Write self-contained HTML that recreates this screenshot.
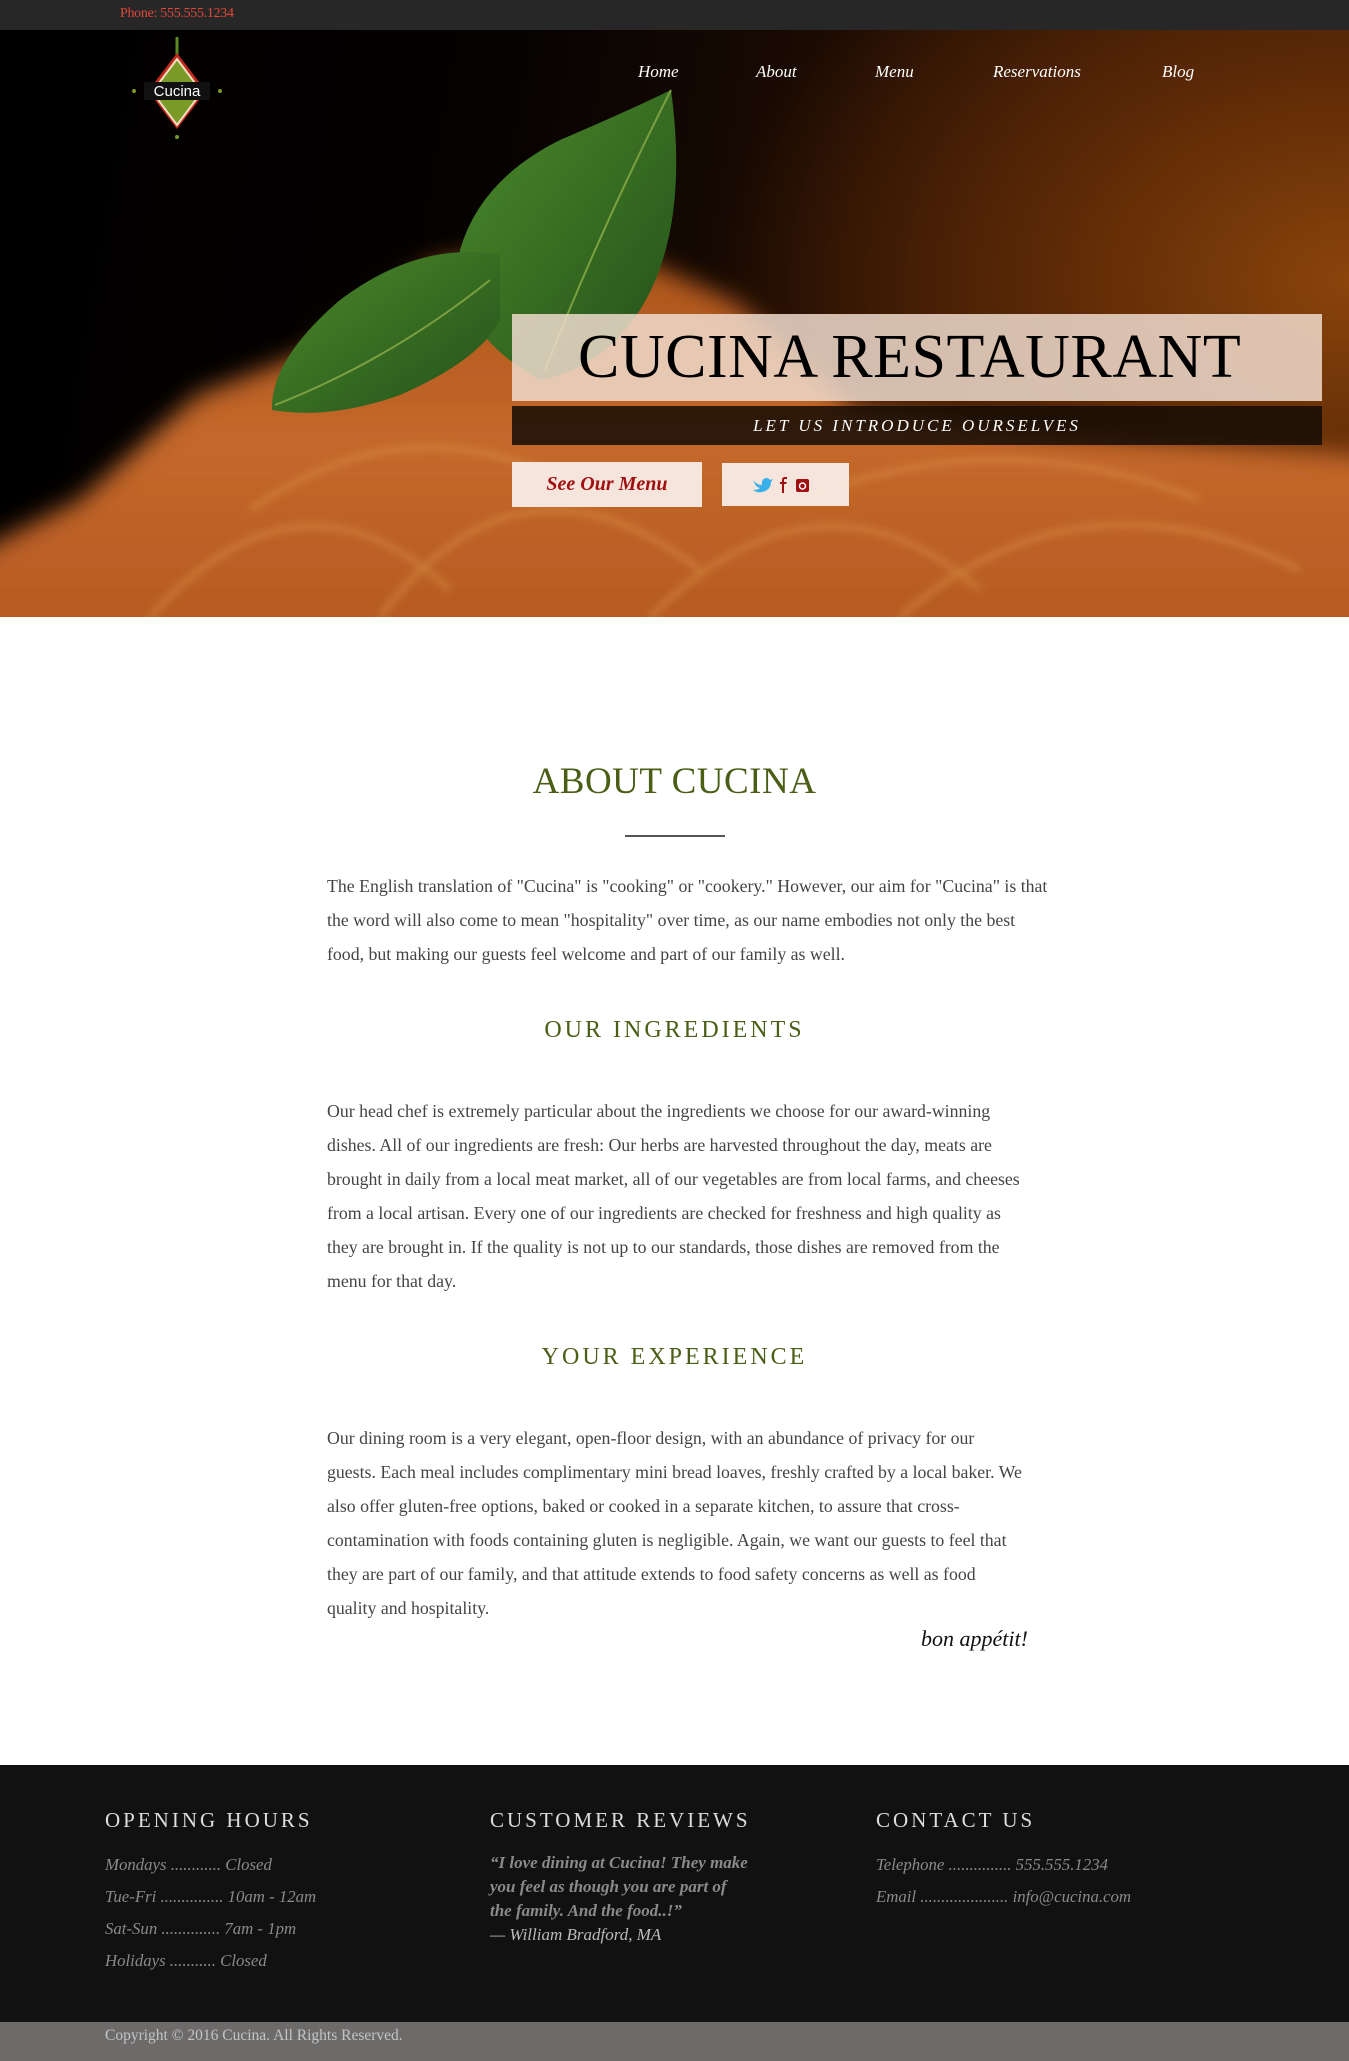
<!DOCTYPE html>
<html><head><meta charset="utf-8"><style>
*{margin:0;padding:0;box-sizing:border-box}
body{width:1349px;height:2061px;overflow:hidden;background:#fff;font-family:"Liberation Serif",serif;position:relative}
.abs{position:absolute}
#top{left:0;top:0;width:1349px;height:30px;background:#272727}
#top span{position:absolute;left:120px;top:6px;color:#e0483a;font-size:14px;letter-spacing:-0.3px}
#hero{left:0;top:30px;width:1349px;height:587px;overflow:hidden;
background:radial-gradient(ellipse 700px 500px at 1349px 250px,#8a440b 0%,#5a2806 45%,rgba(20,8,2,0) 90%),linear-gradient(100deg,#000 0%,#050201 35%,#1e0c03 60%,#3a1a05 100%)}
.nav{color:#fff;font-style:italic;font-size:17px}
#tbox{left:512px;top:314px;width:810px;height:87px;background:rgba(238,218,205,0.85)}
#tbox span{position:absolute;left:66px;top:8px;font-size:62px;color:#000;letter-spacing:0.5px;white-space:nowrap}
#dbar{left:512px;top:406px;width:810px;height:39px;background:rgba(20,12,5,0.85);color:#fff;font-style:italic;font-size:17px;letter-spacing:3px;text-align:center;line-height:39px}
#b1{left:512px;top:462px;width:190px;height:45px;background:rgba(250,240,235,0.92);color:#a01010;font-style:italic;font-weight:bold;font-size:20px;text-align:center;line-height:45px}
#b2{left:722px;top:463px;width:127px;height:43px;background:rgba(250,240,235,0.92)}
h2{position:absolute;left:0;width:1349px;text-align:center;color:#4a5e16;font-weight:normal}
p.t{position:absolute;left:327px;width:800px;font-size:17.8px;line-height:34px;color:#444;white-space:nowrap}
.fh{position:absolute;top:1808px;color:#ddd;font-size:21px;letter-spacing:3px}
.fi{position:absolute;color:#8a8a8a;font-style:italic;font-size:16.8px;line-height:32px;white-space:nowrap}
</style></head><body>
<div id="top" class="abs"><span>Phone: 555.555.1234</span></div>
<div id="hero" class="abs">
<svg class="abs" style="left:0;top:0" width="1349" height="587" viewBox="0 0 1349 587">
<defs>
<linearGradient id="pg" x1="0" y1="0" x2="0" y2="1">
<stop offset="0" stop-color="#a9521a"/><stop offset="0.45" stop-color="#c4682a"/><stop offset="1" stop-color="#b0561f"/></linearGradient>
<linearGradient id="lg" x1="0" y1="0" x2="1" y2="1"><stop offset="0" stop-color="#4c8a2a"/><stop offset="1" stop-color="#23501a"/></linearGradient>
<filter id="bl" x="-10%" y="-10%" width="120%" height="130%"><feGaussianBlur stdDeviation="12"/></filter>
<filter id="bl2"><feGaussianBlur stdDeviation="4"/></filter>
</defs>
<path d="M-60 540 L-60 660 L1420 660 L1420 430 L1052 404 L855 378 L736 272 L592 207 L434 233 L302 325 L197 365 L79 470 Z" fill="url(#pg)" filter="url(#bl)"/>
<g stroke="#e09a50" stroke-width="6" fill="none" opacity="0.45" filter="url(#bl2)">
<path d="M150 587 Q300 420 450 560"/><path d="M380 587 Q520 400 700 540"/><path d="M650 587 Q820 420 980 560"/><path d="M900 587 Q1080 430 1300 540"/><path d="M250 480 Q420 360 600 470"/><path d="M800 470 Q1000 390 1200 470"/>
</g>
<path d="M671 60 Q690 200 640 280 Q600 340 540 350 Q450 300 460 220 Q480 150 560 110 Q630 80 671 60 Z" fill="url(#lg)"/>
<path d="M671 60 Q600 200 545 340" stroke="#7aa040" stroke-width="2" fill="none"/>
<path d="M500 225 Q420 210 340 270 Q270 330 272 380 Q330 390 400 365 Q480 330 500 290 Z" fill="url(#lg)"/>
<path d="M275 375 Q390 330 490 250" stroke="#7aa040" stroke-width="2" fill="none"/>
</svg>
<svg class="abs" style="left:124px;top:5px" width="106" height="110" viewBox="0 0 106 110">
<path d="M53 2 L53 20" stroke="#5a8a20" stroke-width="3"/>
<path d="M53 18 L82 56 L53 94 L24 56 Z" fill="#c02a1e"/>
<path d="M53 24 L74 52 L32 52 Z" fill="#7a9a28" stroke="#f0e0c0" stroke-width="2"/>
<path d="M32 62 L74 62 L53 90 Z" fill="#7a9a28" stroke="#f0e0c0" stroke-width="2"/>
<rect x="20" y="47" width="66" height="18" fill="#111"/>
<text x="53" y="61" fill="#fff" font-family="Liberation Sans,sans-serif" font-size="15" text-anchor="middle">Cucina</text>
<circle cx="10" cy="56" r="2" fill="#7a9a28"/><circle cx="96" cy="56" r="2" fill="#7a9a28"/>
<circle cx="53" cy="102" r="2" fill="#7a9a28"/>
</svg>
<span class="abs nav" style="left:638px;top:32px">Home</span>
<span class="abs nav" style="left:756px;top:32px">About</span>
<span class="abs nav" style="left:875px;top:32px">Menu</span>
<span class="abs nav" style="left:993px;top:32px">Reservations</span>
<span class="abs nav" style="left:1162px;top:32px">Blog</span>
</div>
<div id="tbox" class="abs"><span>CUCINA RESTAURANT</span></div>
<div id="dbar" class="abs">LET US INTRODUCE OURSELVES</div>
<div id="b1" class="abs">See Our Menu</div>
<div id="b2" class="abs">
<svg class="abs" style="left:30px;top:13px" width="70" height="18" viewBox="0 0 70 18">
<path d="M1 4 Q5 9 10 9 Q9 3 14 2 Q17 2 18 4 L21 3 L19 6 Q19 14 10 16 Q5 17 1 14 Q6 14 8 12 Q4 11 3 8 Q2 6 1 4Z" fill="#3ab0e8"/>
<path d="M30 17 L30 8 L28 8 L28 6 L30 6 L30 4 Q30 1 33 1 L35 1 L35 3 L33 3 Q32 3 32 4 L32 6 L35 6 L34 8 L32 8 L32 17Z" fill="#a01010"/>
<rect x="44" y="3" width="13" height="13" rx="2" fill="#a01010"/><circle cx="50.5" cy="10" r="3" fill="none" stroke="#fff" stroke-width="1.5"/>
</svg></div>
<h2 style="top:760px;font-size:37px;letter-spacing:0.5px">ABOUT CUCINA</h2>
<div class="abs" style="left:625px;top:835px;width:100px;height:2px;background:#555"></div>
<p class="t" style="top:869px">The English translation of "Cucina" is "cooking" or "cookery." However, our aim for "Cucina" is that<br>the word will also come to mean "hospitality" over time, as our name embodies not only the best<br>food, but making our guests feel welcome and part of our family as well.</p>
<h2 style="top:1017px;font-size:24px;letter-spacing:3px">OUR INGREDIENTS</h2>
<p class="t" style="top:1094px">Our head chef is extremely particular about the ingredients we choose for our award-winning<br>dishes. All of our ingredients are fresh: Our herbs are harvested throughout the day, meats are<br>brought in daily from a local meat market, all of our vegetables are from local farms, and cheeses<br>from a local artisan. Every one of our ingredients are checked for freshness and high quality as<br>they are brought in. If the quality is not up to our standards, those dishes are removed from the<br>menu for that day.</p>
<h2 style="top:1344px;font-size:24px;letter-spacing:3px">YOUR EXPERIENCE</h2>
<p class="t" style="top:1421px">Our dining room is a very elegant, open-floor design, with an abundance of privacy for our<br>guests. Each meal includes complimentary mini bread loaves, freshly crafted by a local baker. We<br>also offer gluten-free options, baked or cooked in a separate kitchen, to assure that cross-<br>contamination with foods containing gluten is negligible. Again, we want our guests to feel that<br>they are part of our family, and that attitude extends to food safety concerns as well as food<br>quality and hospitality.</p>
<div class="abs" style="left:921px;top:1626px;font-style:italic;font-size:22px;color:#111">bon appétit!</div>
<div class="abs" style="left:0;top:1765px;width:1349px;height:257px;background:#111"></div>
<div class="fh" style="left:105px">OPENING HOURS</div>
<div class="fh" style="left:490px">CUSTOMER REVIEWS</div>
<div class="fh" style="left:876px">CONTACT US</div>
<div class="fi" style="left:105px;top:1849px">Mondays ............ Closed<br>Tue-Fri ............... 10am - 12am<br>Sat-Sun .............. 7am - 1pm<br>Holidays ........... Closed</div>
<div class="fi" style="left:490px;top:1851px;line-height:24px;font-weight:bold;color:#8a8a8a;font-size:17px">“I love dining at Cucina! They make<br>you feel as though you are part of<br>the family. And the food..!”<br><span style="color:#bbb;font-weight:normal">— William Bradford, MA</span></div>
<div class="fi" style="left:876px;top:1849px">Telephone ............... 555.555.1234<br>Email ..................... info@cucina.com</div>
<div class="abs" style="left:0;top:2022px;width:1349px;height:39px;background:#6d6a6a"></div>
<div class="abs" style="left:105px;top:2027px;font-size:15.5px;color:#c4c4c4">Copyright © 2016 Cucina. All Rights Reserved.</div>
</body></html>
